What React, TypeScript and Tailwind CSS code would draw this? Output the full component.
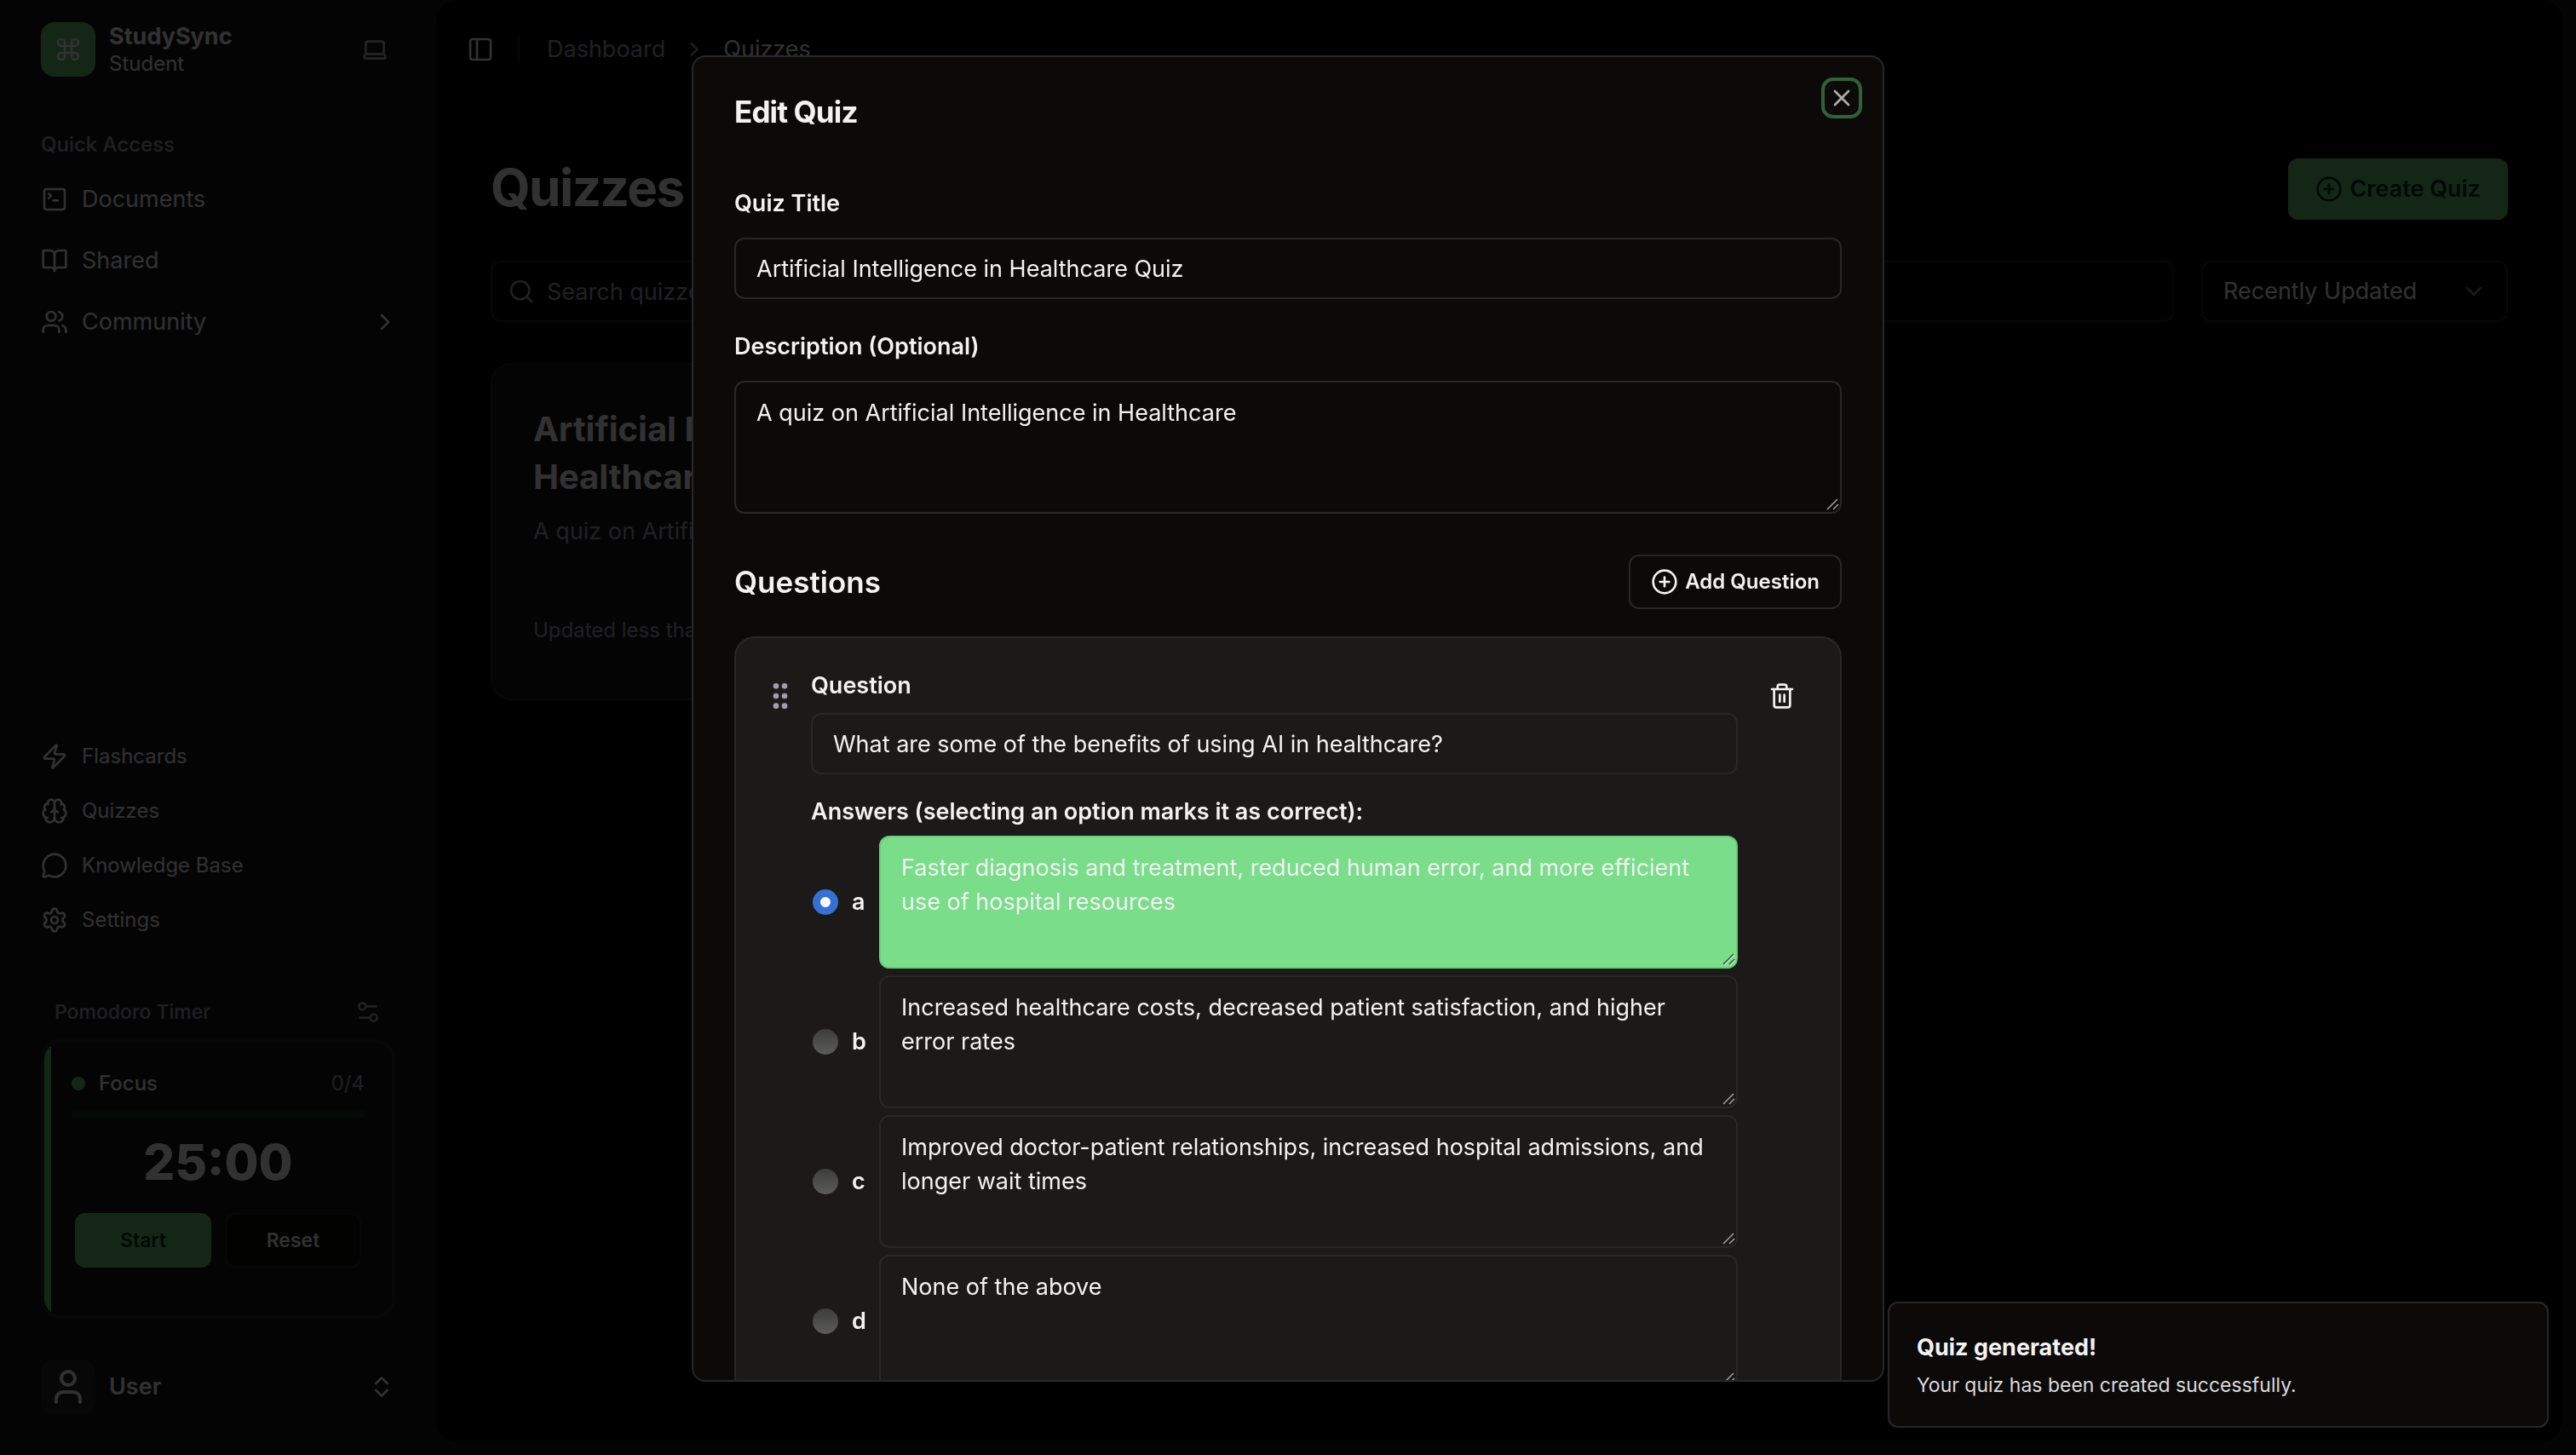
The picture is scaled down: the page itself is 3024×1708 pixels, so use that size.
import {
  BookOpen, Brain, ChevronDown, ChevronRight, ChevronsUpDown, CirclePlus, Command, GripVertical, Laptop,
  MessageCircle, PanelLeft, Search, Settings, Settings2, SquareTerminal, Trash2, User, Users, X, Zap,
} from "lucide-react";

const quickLinks = [
  { label: "Documents", icon: SquareTerminal },
  { label: "Shared", icon: BookOpen },
  { label: "Community", icon: Users, expandable: true },
];

const toolLinks = [
  { label: "Flashcards", icon: Zap },
  { label: "Quizzes", icon: Brain },
  { label: "Knowledge Base", icon: MessageCircle },
  { label: "Settings", icon: Settings },
];

const answers = [
  { key: "a", text: "Faster diagnosis and treatment, reduced human error, and more efficient use of hospital resources" },
  { key: "b", text: "Increased healthcare costs, decreased patient satisfaction, and higher error rates" },
  { key: "c", text: "Improved doctor-patient relationships, increased hospital admissions, and longer wait times" },
  { key: "d", text: "None of the above" },
];

function Pomodoro() {
  return (
    <section className="mt-14">
      <div className="flex h-12 items-center justify-between px-4 text-[23px] font-medium text-zinc-400">
        <h2>Pomodoro Timer</h2>
        <button aria-label="Timer settings"><Settings2 className="size-8" /></button>
      </div>
      <div className="mt-2 flex overflow-hidden rounded-3xl border-4 border-zinc-800">
        <div className="w-2 bg-[#64c36e]" />
        <div className="flex-1 px-6 pt-8 pb-14 pr-8">
          <div className="flex h-8 items-center gap-4 text-[24px]">
            <span className="size-4 rounded-full bg-[#64c36e]" />
            <span className="font-medium">Focus</span>
            <span className="ml-auto text-zinc-400">0/4</span>
          </div>
          <div className="mt-4 h-2 rounded-full bg-[#1b2d1e]" />
          <div className="mt-4 text-center text-[58px] leading-[72px] font-extrabold">25:00</div>
          <div className="mt-6 grid grid-cols-2 gap-4 px-1 text-[23px] font-semibold">
            <button className="h-16 rounded-xl bg-[#64c36e] text-[#052e16]">Start</button>
            <button className="h-16 rounded-xl border-2 border-zinc-800 bg-[#0c0a09]">Reset</button>
          </div>
        </div>
      </div>
    </section>
  );
}

function Sidebar() {
  return (
    <aside className="flex w-[512px] shrink-0 flex-col px-12 pt-6">
      <div className="flex h-[68px] items-center gap-4">
        <div className="flex size-16 items-center justify-center rounded-2xl bg-[#64c36e]">
          <Command className="size-8" />
        </div>
        <div className="flex-1">
          <div className="text-[27px] leading-[34px] font-bold">StudySync</div>
          <div className="text-[24px] leading-[30px]">Student</div>
        </div>
        <button className="mr-2 opacity-70" aria-label="Theme"><Laptop className="size-8" /></button>
      </div>
      <nav className="mt-[46px] text-[27px]">
        <h2 className="flex h-16 items-center text-[24px] font-medium text-zinc-400">Quick Access</h2>
        <ul className="flex flex-col gap-2">
          {quickLinks.map(({ label, icon: Icon, expandable }) => (
            <li key={label}>
              <a href="#" className="flex h-16 items-center gap-4">
                <Icon className="size-8" />
                {label}
                {expandable && <ChevronRight className="-mr-1 ml-auto size-8" />}
              </a>
            </li>
          ))}
        </ul>
      </nav>
      <nav className="mt-auto text-[24px]">
        <ul className="flex flex-col gap-2">
          {toolLinks.map(({ label, icon: Icon }) => (
            <li key={label}>
              <a href="#" className="flex h-14 items-center gap-4">
                <Icon className="size-8" />
                {label}
              </a>
            </li>
          ))}
        </ul>
      </nav>
      <Pomodoro />
      <button className="my-12 flex items-center gap-4 text-left text-[27px] font-semibold">
        <span className="flex size-16 items-center justify-center rounded-2xl bg-[#27272a]">
          <User className="size-12" />
        </span>
        User
        <ChevronsUpDown className="ml-auto size-8" />
      </button>
    </aside>
  );
}

function QuizzesPage() {
  return (
    <main className="mr-4 mb-4 flex-1 rounded-3xl bg-[#030303]">
      <header className="flex h-[116px] items-center pl-9 text-[27px]">
        <button aria-label="Toggle sidebar"><PanelLeft className="size-8" /></button>
        <div className="ml-7 h-8 w-0.5 bg-zinc-800" />
        <nav aria-label="Breadcrumb" className="ml-8 flex items-center gap-5">
          <a href="#" className="text-zinc-400">Dashboard</a>
          <ChevronRight className="size-7 text-zinc-400" />
          <span>Quizzes</span>
        </nav>
      </header>
      <div className="px-16 pt-[70px]">
        <div className="flex items-start justify-between">
          <h1 className="text-[60px] leading-[68px] font-bold tracking-tight">Quizzes</h1>
          <button className="flex h-[72px] items-center gap-2 rounded-xl bg-[#64c36e] px-8 text-[27px] font-semibold text-[#052e16]">
            <CirclePlus className="size-8" />
            Create Quiz
          </button>
        </div>
        <div className="mt-12 flex gap-8 text-[27px]">
          <div className="relative flex-1">
            <Search className="absolute top-5 left-5 size-8 text-zinc-400" />
            <input
              aria-label="Search quizzes"
              placeholder="Search quizzes..."
              className="h-[72px] w-full rounded-xl border-2 border-zinc-800 pl-16 placeholder:text-zinc-400"
            />
          </div>
          <div className="relative w-[360px]">
            <select aria-label="Sort by" className="h-[72px] w-full appearance-none rounded-xl border-2 border-zinc-800 pl-6">
              <option>Recently Updated</option>
            </select>
            <ChevronDown className="pointer-events-none absolute top-5 right-6 size-8 opacity-50" />
          </div>
        </div>
        <div className="mt-12 grid grid-cols-3 gap-12">
          <article className="rounded-3xl border-2 border-zinc-800 bg-zinc-900 px-12 pt-12 pb-16">
            <h2 className="pr-24 text-[40px] leading-[56px] font-bold">Artificial Intelligence in Healthcare Quiz</h2>
            <p className="mt-4 text-[27px] leading-10 text-zinc-400">A quiz on Artificial Intelligence in Healthcare</p>
            <p className="mt-20 text-[24px] leading-8 text-zinc-400">Updated less than a minute ago</p>
          </article>
        </div>
      </div>
    </main>
  );
}

function ResizeGrip({ dark = false }: { dark?: boolean }) {
  return (
    <svg
      viewBox="0 0 16 16"
      aria-hidden="true"
      fill="none"
      strokeWidth="1.5"
      className="pointer-events-none absolute right-[3px] bottom-[3px] size-4"
    >
      {dark && <path d="M3 15 15 3M10 15l6-6" className="stroke-[#c4efcc]" />}
      <path d="M2 14 14 2M9 14l6-6" className={dark ? "stroke-[#2f5237]" : "stroke-[#a3a3a3]"} />
    </svg>
  );
}

function Answer({ id, text, correct }: { id: string; text: string; correct: boolean }) {
  return (
    <div className="flex items-center">
      <input
        type="radio"
        name="correct"
        id={`answer-${id}`}
        defaultChecked={correct}
        className="ml-0.5 size-[30px] shrink-0 appearance-none rounded-full bg-linear-to-b from-[#3d3d3c] to-[#5c5c5b] checked:border-9 checked:border-[#3670d6] checked:bg-white checked:bg-none"
      />
      <label htmlFor={`answer-${id}`} className="w-12 shrink-0 pl-4 text-[27px] font-semibold">{id}</label>
      <div className="relative flex-1">
        <textarea
          rows={3}
          aria-label={`Answer ${id}`}
          defaultValue={text}
          className={
            correct
              ? "block w-full resize-none rounded-xl border-2 border-[#68cb78] bg-[#79dd8a] px-6 py-4 text-[27px] leading-10"
              : "block w-full resize-none rounded-xl border-2 border-[#27272a] px-6 py-4 text-[27px] leading-10"
          }
        />
        <ResizeGrip dark={correct} />
      </div>
    </div>
  );
}

function EditQuizDialog() {
  return (
    <div className="fixed inset-0 flex justify-center pt-[65px] pb-[86px]">
      <div role="dialog" aria-labelledby="dialog-title" className="relative w-full max-w-[1400px] overflow-hidden rounded-2xl border-2 border-[#27272a] bg-[#0c0a09]">
        <div className="h-full overflow-y-auto p-12 [scrollbar-width:none]">
          <h2 id="dialog-title" className="text-[35px] leading-8 font-bold tracking-tight">Edit Quiz</h2>
          <button
            aria-label="Close"
            className="absolute top-8 right-8 rounded-md text-[#aeadad] ring-4 ring-[#2f6238] ring-offset-4 ring-offset-[#0c0a09]"
          >
            <X className="size-8" />
          </button>
          <form className="mt-[68px]">
            <label htmlFor="quiz-title" className="block text-[27px] leading-[48px] font-semibold">Quiz Title</label>
            <input
              id="quiz-title"
              defaultValue="Artificial Intelligence in Healthcare Quiz"
              className="mt-4 block h-[72px] w-full rounded-xl border-2 border-[#27272a] px-6 text-[27px]"
            />
            <label htmlFor="quiz-description" className="mt-8 block text-[27px] leading-[48px] font-semibold">Description (Optional)</label>
            <div className="relative mt-4">
              <textarea
                id="quiz-description"
                rows={3}
                defaultValue="A quiz on Artificial Intelligence in Healthcare"
                className="block w-full resize-none rounded-xl border-2 border-[#27272a] px-6 py-4 text-[27px] leading-10"
              />
              <ResizeGrip />
            </div>
            <div className="mt-12 flex items-center justify-between">
              <h3 className="text-[35px] leading-[56px] font-semibold">Questions</h3>
              <button type="button" className="flex h-16 items-center gap-2 rounded-xl border-2 border-[#27272a] px-6 text-[24px] font-semibold">
                <CirclePlus className="size-8" />
                Add Question
              </button>
            </div>
            <div className="mt-8 flex items-start gap-4 rounded-3xl border-2 border-[#27272a] bg-[#1c1a18] p-8">
              <div className="flex h-[72px] items-center text-zinc-400"><GripVertical className="size-10" /></div>
              <div className="flex-1">
                <label htmlFor="question" className="block text-[27px] leading-[48px] font-semibold">Question</label>
                <input
                  id="question"
                  defaultValue="What are some of the benefits of using AI in healthcare?"
                  className="mt-2 block h-[72px] w-full rounded-xl border-2 border-[#27272a] px-6 text-[27px]"
                />
                <fieldset className="mt-5">
                  <legend className="text-[27px] leading-[48px] font-semibold">Answers (selecting an option marks it as correct):</legend>
                  <div className="mt-1 flex flex-col gap-2">
                    {answers.map((a) => (
                      <Answer key={a.key} id={a.key} text={a.text} correct={a.key === "a"} />
                    ))}
                  </div>
                </fieldset>
              </div>
              <button type="button" aria-label="Delete question" className="flex size-[72px] items-center justify-center">
                <Trash2 className="size-8" />
              </button>
            </div>
          </form>
        </div>
      </div>
    </div>
  );
}

export default function App() {
  return (
    <div className="flex min-h-screen bg-zinc-900 font-['Inter',sans-serif] text-[#f2f2f2]">
      <Sidebar />
      <QuizzesPage />
      <div className="fixed inset-0 bg-black/80" />
      <EditQuizDialog />
      <div role="status" className="fixed right-8 bottom-8 w-[776px] rounded-xl border-2 border-[#27272a] bg-[#0c0a09] px-8 pt-8 pb-7">
        <div className="text-[27px] leading-10 font-bold">Quiz generated!</div>
        <div className="mt-1 text-[23px] leading-10 text-[#dbdada]">Your quiz has been created successfully.</div>
      </div>
    </div>
  );
}
